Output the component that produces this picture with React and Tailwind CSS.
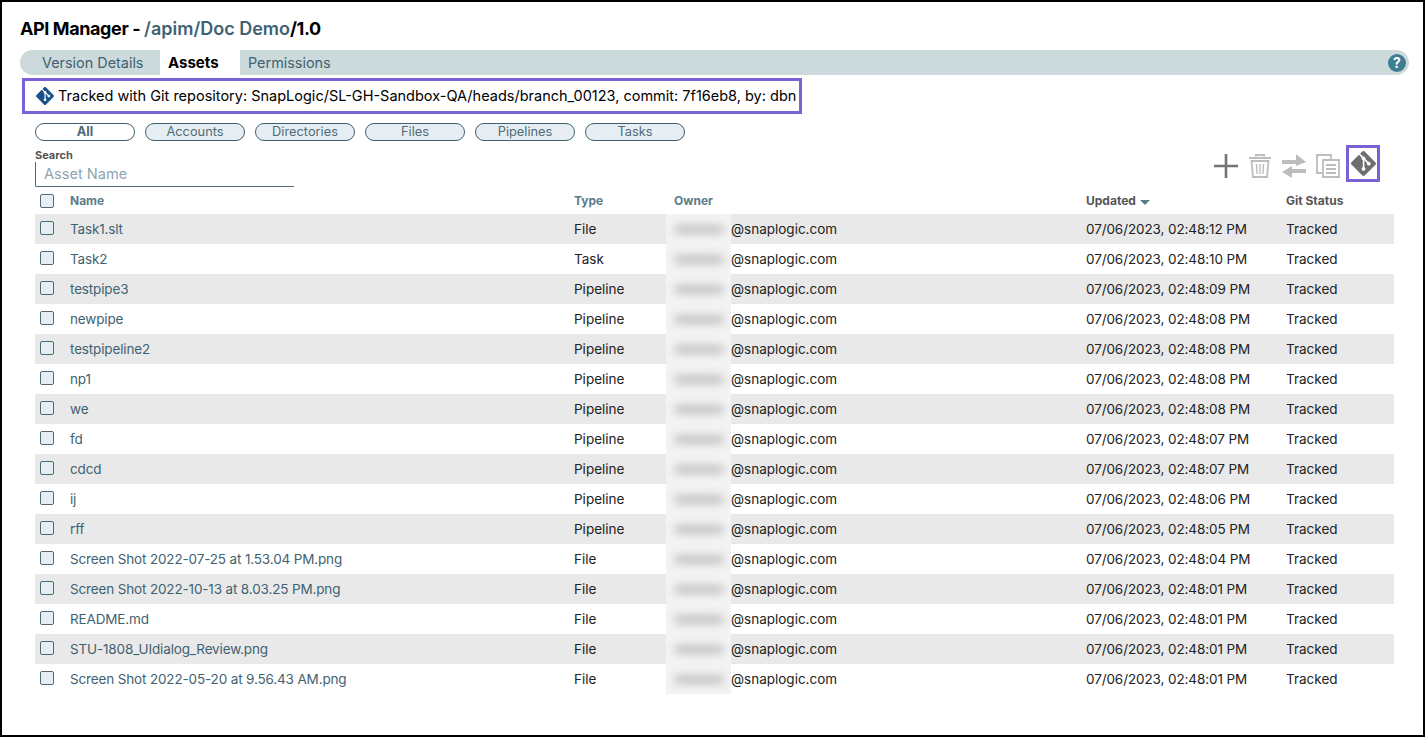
import { SiGit } from "react-icons/si";

const rows = [
  ["Task1.slt", "File", "07/06/2023, 02:48:12 PM"],
  ["Task2", "Task", "07/06/2023, 02:48:10 PM"],
  ["testpipe3", "Pipeline", "07/06/2023, 02:48:09 PM"],
  ["newpipe", "Pipeline", "07/06/2023, 02:48:08 PM"],
  ["testpipeline2", "Pipeline", "07/06/2023, 02:48:08 PM"],
  ["np1", "Pipeline", "07/06/2023, 02:48:08 PM"],
  ["we", "Pipeline", "07/06/2023, 02:48:08 PM"],
  ["fd", "Pipeline", "07/06/2023, 02:48:07 PM"],
  ["cdcd", "Pipeline", "07/06/2023, 02:48:07 PM"],
  ["ij", "Pipeline", "07/06/2023, 02:48:06 PM"],
  ["rff", "Pipeline", "07/06/2023, 02:48:05 PM"],
  ["Screen Shot 2022-07-25 at 1.53.04 PM.png", "File", "07/06/2023, 02:48:04 PM"],
  ["Screen Shot 2022-10-13 at 8.03.25 PM.png", "File", "07/06/2023, 02:48:01 PM"],
  ["README.md", "File", "07/06/2023, 02:48:01 PM"],
  ["STU-1808_UIdialog_Review.png", "File", "07/06/2023, 02:48:01 PM"],
  ["Screen Shot 2022-05-20 at 9.56.43 AM.png", "File", "07/06/2023, 02:48:01 PM"],
];

const pills = ["Accounts", "Directories", "Files", "Pipelines", "Tasks"];

function Check() {
  return <div className="w-[14px] h-[14px] rounded-[2px] border border-[#4f6b78] bg-[#e6eef3]" />;
}

function App() {
  return (
    <div className="w-[1425px] h-[737px] overflow-hidden bg-white border-2 border-black font-['Inter',sans-serif] text-[13.5px] text-[#222]">
      <div className="pl-[18px] pt-[16px] h-[48px] text-[18px] leading-[22px] font-bold tracking-[-0.4px] text-black">
        API Manager - <span className="text-[#3f6272] font-semibold tracking-[0px]">/apim/Doc Demo</span>/1.0
      </div>

      <div className="ml-[18px] w-[1389px] h-[25px] flex items-center rounded-full bg-[#cddadc] text-[14.4px] text-[#3f6272]">
        <div className="w-[140px] pl-[22px] leading-[25px]">Version Details</div>
        <div className="w-[80px] h-full bg-white pl-[8px] leading-[25px] text-[15px] font-bold text-black">Assets</div>
        <div className="pl-[8px] leading-[25px]">Permissions</div>
        <div className="ml-auto mr-[3px] w-[18px] h-[18px] rounded-full bg-[#3f7d92] text-white text-[14px] font-bold flex items-center justify-center">?</div>
      </div>

      <div className="ml-[20px] mt-[3px] w-[780px] h-[36px] border-[3px] border-[#7a62d6] flex items-center pl-[11px] text-[14.5px] text-black whitespace-nowrap">
        <SiGit className="w-[18px] h-[18px] text-[#17508a] shrink-0 mr-[4px]" />
        <span>Tracked with Git repository: SnapLogic/SL-GH-Sandbox-QA/heads/branch_00123, commit: 7f16eb8, by: dbn</span>
      </div>

      <div className="ml-[33px] mt-[9px] flex gap-[10px] text-[12.8px] leading-[16px]">
        <div className="w-[100px] h-[18px] rounded-full border border-[#3f5f6e] bg-white text-center font-bold text-[#4f6b78]">All</div>
        {pills.map((p) => (
          <div key={p} className="w-[100px] h-[18px] rounded-full border border-[#3f5f6e] bg-[#e6eef3] text-center text-[#4f6b78]">{p}</div>
        ))}
      </div>

      <div className="ml-[33px] w-[1345px] h-[47px] flex justify-between">
        <div className="pt-[7px] w-[259px]">
          <div className="text-[11px] leading-[14px] font-bold text-[#555]">Search</div>
          <div className="h-[25px] border-l border-b border-[#4f6b78] rounded-bl-[2px] pl-[8px] text-[14.6px] leading-[24px] text-[#8fa5ae]">Asset Name</div>
        </div>
        <div className="flex items-start pt-[6px] h-[43px]">
          <svg viewBox="0 0 24 24" className="w-[24px] h-[24px] mt-[7px] mr-[11px]">
            <path d="M12 0v24M0 12h24" stroke="#737373" strokeWidth="2.6" fill="none" />
          </svg>
          <svg viewBox="0 0 22 24" className="w-[22px] h-[24px] mt-[7px] mr-[11px]" fill="none" stroke="#bdbdbd">
            <path d="M7 2.500V1h8v1.500M0 4h22" strokeWidth="2.200" />
            <path d="M2.500 7h17L18 23H4L2.500 7z" strokeWidth="1.800" />
            <path d="M7.500 10l.5 10M11 10v10M14.500 10l-.5 10" strokeWidth="1.400" />
          </svg>
          <svg viewBox="0 0 24 24" className="w-[24px] h-[24px] mt-[7px] mr-[10px]" fill="#bdbdbd">
            <path d="M0 6h14V0l10 8-10 4V10H0z" />
            <path d="M24 15H10v-3L0 18l10 6v-5h14z" />
          </svg>
          <svg viewBox="0 0 24 24" className="w-[24px] h-[24px] mt-[7px] mr-[6px]" fill="none" stroke="#bdbdbd" strokeWidth="1.800">
            <path d="M15 6V1H1v18h6" />
            <path d="M7 6h16v17H7z" fill="#fff" />
            <path d="M10 11h10M10 15h10M10 19h10" strokeWidth="2" />
          </svg>
          <div className="w-[34px] h-[37px] -mt-[2px] border-[3px] border-[#7a62d6] flex items-center justify-center">
            <SiGit className="w-[25px] h-[25px] text-[#6e6e6e]" />
          </div>
        </div>
      </div>

      <div className="ml-[33px] w-[1359px] h-[26px] grid grid-cols-[35px_504px_100px_412px_200px_1fr] items-center text-[12px] font-bold text-[#5b7c8a]">
        <div className="pl-[5px]"><Check /></div>
        <div>Name</div>
        <div>Type</div>
        <div>Owner</div>
        <div className="text-[#555] flex items-center gap-[4px]">
          Updated
          <span className="w-0 h-0 mt-[2px] border-x-[5.500px] border-x-transparent border-t-[5px] border-t-[#5b7c8a]" />
        </div>
        <div className="text-[#555]">Git Status</div>
      </div>

      <div className="ml-[33px] w-[1359px]">
        {rows.map(([name, type, updated]) => (
          <div key={name} className="h-[30px] grid grid-cols-[35px_504px_100px_412px_200px_1fr] items-center odd:bg-[#e9e9e9]">
            <div className="pl-[5px] -mt-[2px]"><Check /></div>
            <div className="text-[#3f6272] tracking-[-0.15px] whitespace-nowrap">{name}</div>
            <div>{type}</div>
            <div className="flex items-center h-full -ml-[8px]">
              <div className="w-[65px] h-full bg-[#f3f3f3] flex items-center justify-center shrink-0 overflow-hidden">
                <div className="w-[50px] h-[9px] rounded-full bg-[#c4c4c4] blur-[4px]" />
              </div>
              <span>@snaplogic.com</span>
            </div>
            <div className="tracking-[-0.1px] whitespace-nowrap">{updated}</div>
            <div>Tracked</div>
          </div>
        ))}
      </div>
    </div>
  );
}

export default App;
